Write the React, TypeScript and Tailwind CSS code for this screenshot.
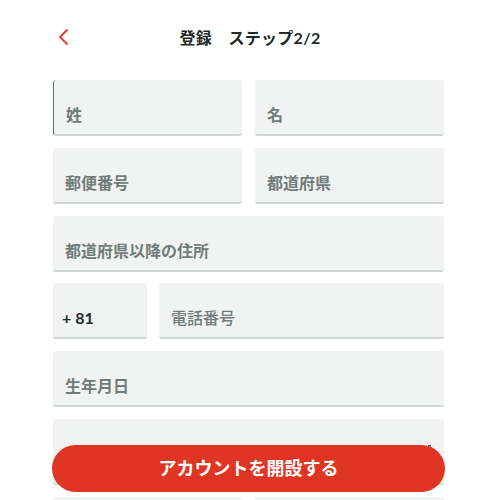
import React from "react";

const font = "font-['Lato','Noto_Sans_CJK_JP',sans-serif]";

type FieldProps = {
  label: string;
  className?: string;
  dark?: boolean;
  light?: boolean;
  focused?: boolean;
};

const Field: React.FC<FieldProps> = ({ label, className = "", dark, light, focused }) => (
  <div
    className={`h-[56px] rounded-[3px] bg-[#f1f3f2] border-b-2 border-[#cfd6d5] flex items-end pb-[11px] pl-3 ${
      focused ? "border-l border-l-[#6a7270]" : ""
    } ${className}`}
  >
    <span
      className={`text-[16px] leading-none ${light ? "font-medium" : "font-bold"} ${
        dark ? "text-[#1f2b29]" : "text-[#6f7c79]"
      }`}
    >
      {label}
    </span>
  </div>
);

const App: React.FC = () => {
  return (
    <div className={`relative h-screen w-[500px] overflow-hidden bg-white ${font}`}>
      <header className="relative h-[80px] flex items-start justify-center pt-[26px]">
        <button className="absolute left-[57px] top-[28px] text-[#e23b2b]">
          <svg width="14" height="18" viewBox="0 0 14 18" fill="none">
            <path
              d="M10 2 L3 9 L10 16"
              stroke="currentColor"
              strokeWidth="1.8"
              strokeLinecap="round"
              strokeLinejoin="round"
            />
          </svg>
        </button>
        <h1 className="text-[16px] font-bold text-[#1d2a28] tracking-[0.3px]">
          登録　ステップ2/2
        </h1>
      </header>

      <div className="ml-[53px] w-[391px] flex flex-col gap-[11.75px]">
        <div className="grid grid-cols-[189px_189px] gap-[13px]">
          <Field label="姓" focused />
          <Field label="名" />
        </div>
        <div className="grid grid-cols-[189px_189px] gap-[13px]">
          <Field label="郵便番号" />
          <Field label="都道府県" />
        </div>
        <Field label="都道府県以降の住所" />
        <div className="grid grid-cols-[94px_285px] gap-[12px]">
          <Field label="+ 81" dark className="pl-[9px]" />
          <Field label="電話番号" light />
        </div>
        <Field label="生年月日" />
        <div className="h-[66px] rounded-[3px] bg-[#f1f3f2] border-b-2 border-[#cfd6d5] relative">
          <span className="absolute right-[13px] top-[26px] w-[3px] h-[3px] bg-[#666]" />
        </div>
        <div className="grid grid-cols-[189px_189px] gap-[13px]">
          <Field label="" />
          <Field label="" />
        </div>
      </div>

      <button className="absolute left-[52px] bottom-[8px] w-[393px] h-[47px] rounded-full bg-[#df3522] text-white text-[18px] font-bold flex items-center justify-center">
        アカウントを開設する
      </button>
    </div>
  );
};

export default App;
